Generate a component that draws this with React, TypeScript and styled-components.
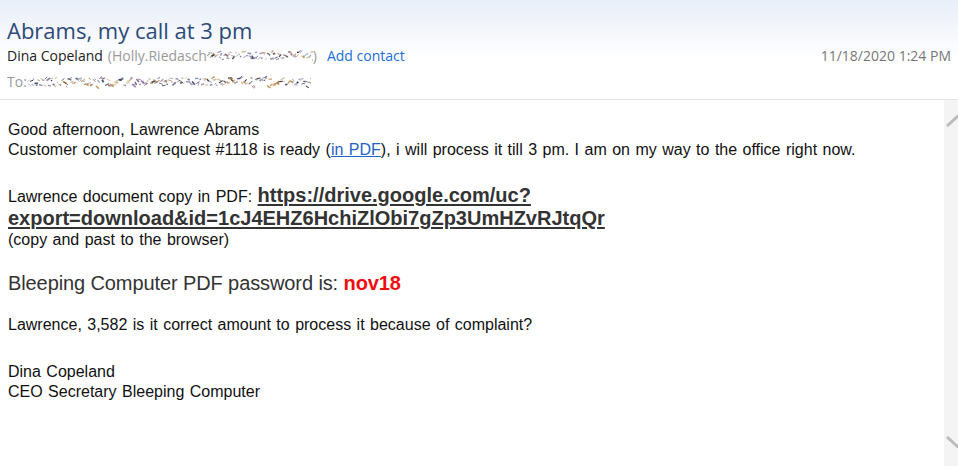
import styled, { createGlobalStyle } from "styled-components";

const Global = createGlobalStyle`
  html, body { margin: 0; padding: 0; background: #fff; }
  body { width: 958px; height: 466px; overflow: hidden; }
`;

const Window = styled.div`
  width: 958px;
  height: 466px;
  display: flex;
  flex-direction: column;
  background: #fff;
`;

const Header = styled.header`
  height: 100px;
  box-sizing: border-box;
  padding: 15px 7px 0 7px;
  border-bottom: 1px solid #e2e2e2;
  background: linear-gradient(#e8eef8 0px, #f6f8fc 35px, #fff 60px);
  font-family: "Open Sans", "Noto Sans", sans-serif;
`;

const Subject = styled.h1`
  margin: 0;
  font-size: 22px;
  font-weight: 400;
  line-height: 30px;
  color: #2c4a78;
`;

const MetaRow = styled.div`
  display: flex;
  align-items: center;
  height: 20px;
  font-size: 14px;
  color: #222;
`;

const Muted = styled.span`
  color: #9a9a9a;
  display: inline-flex;
  align-items: center;
  margin-left: 5px;
`;

const AddContact = styled.a`
  margin-left: 10px;
  color: #1a6fd6;
  text-decoration: none;
  font-size: 14px;
`;

const Stamp = styled.span`
  margin-left: auto;
  color: #777;
  font-size: 14px;
`;

const ToRow = styled(MetaRow)`
  margin-top: 6px;
  color: #9a9a9a;
`;

const Main = styled.div`
  flex: 1;
  display: flex;
  min-height: 0;
`;

const Body = styled.div`
  flex: 1;
  padding: 20px 8px 0 8px;
  font-family: "Liberation Sans", Arial, sans-serif;
  font-size: 16px;
  line-height: 20px;
  word-spacing: 1px;
  color: #111;
`;

const Para = styled.p<{ $gap?: number }>`
  margin: 0;
  margin-top: ${(p) => p.$gap ?? 0}px;
`;

const InlineLink = styled.a`
  color: #1f63c6;
  text-decoration: underline;
`;

const BigLink = styled.a`
  font-size: 20px;
  line-height: 23px;
  font-weight: 700;
  word-spacing: 0;
  color: #333;
  text-decoration: underline;
  text-underline-offset: 2px;
`;

const Password = styled.p`
  margin: 21px 0 0 0;
  font-size: 20px;
  line-height: 24px;
  word-spacing: 0;
  letter-spacing: -0.1px;
  color: #333;
`;

const Code = styled.span`
  color: #f00d0d;
  font-weight: 700;
`;

const Scrollbar = styled.div`
  width: 12px;
  overflow: hidden;
  background: #f4f4f4;
  display: flex;
  flex-direction: column;
  justify-content: space-between;
  padding: 15px 0 18px 2px;
`;

function Scribble({ width, seed }: { width: number; seed: number }) {
  let s = seed;
  const rnd = () => {
    s = (s * 9301 + 49297) % 233280;
    return s / 233280;
  };
  const colors = ["#3a3a5a", "#b07a3a", "#7a8ab0", "#202030", "#c59a60", "#8a6a9a"];
  const marks = [];
  for (let x = 0; x < width; x += 1.5) {
    const y = 7 + rnd() * 8;
    const dx = 1 + rnd() * 3;
    const dy = (rnd() - 0.5) * 6;
    marks.push(
      <line
        key={x}
        x1={x}
        y1={y}
        x2={x + dx}
        y2={y + dy}
        stroke={colors[Math.floor(rnd() * colors.length)]}
        strokeWidth={rnd() * 1.2 + 0.6}
        opacity={0.6 + rnd() * 0.4}
      />
    );
  }
  return (
    <svg width={width} height={20} viewBox={`0 0 ${width} 20`}>
      {marks}
    </svg>
  );
}

function Chevron({ up }: { up?: boolean }) {
  return (
    <svg width="24" height="12" viewBox="0 0 24 12" style={{ flexShrink: 0 }}>
      <path
        d={up ? "M1 11 L12 1 L23 11" : "M1 1 L12 11 L23 1"}
        fill="none"
        stroke="#bcbcbc"
        strokeWidth="3"
      />
    </svg>
  );
}

export default function App() {
  return (
    <Window>
      <Global />
      <Header>
        <Subject>Abrams, my call at 3 pm</Subject>
        <MetaRow>
          <span>Dina Copeland</span>
          <Muted>
            (Holly.Riedasch
            <Scribble width={106} seed={7} />)
          </Muted>
          <AddContact href="#">Add contact</AddContact>
          <Stamp>11/18/2020 1:24 PM</Stamp>
        </MetaRow>
        <ToRow>
          <span>To:</span>
          <Scribble width={284} seed={31} />
        </ToRow>
      </Header>
      <Main>
        <Body>
          <Para>Good afternoon, Lawrence Abrams</Para>
          <Para>
            Customer complaint request #1118 is ready (<InlineLink href="#">in PDF</InlineLink>), i will
            process it till 3 pm. I am on my way to the office right now.
          </Para>
          <Para $gap={24}>
            Lawrence document copy in PDF:{" "}
            <BigLink href="#">
              https://drive.google.com/uc?
              <br />
              export=download&amp;id=1cJ4EHZ6HchiZlObi7gZp3UmHZvRJtqQr
            </BigLink>
          </Para>
          <Para>(copy and past to the browser)</Para>
          <Password>
            Bleeping Computer PDF password is: <Code>nov18</Code>
          </Password>
          <Para $gap={20}>Lawrence, 3,582 is it correct amount to process it because of complaint?</Para>
          <Para $gap={27}>Dina Copeland</Para>
          <Para>CEO Secretary Bleeping Computer</Para>
        </Body>
        <Scrollbar>
          <Chevron up />
          <Chevron />
        </Scrollbar>
      </Main>
    </Window>
  );
}
